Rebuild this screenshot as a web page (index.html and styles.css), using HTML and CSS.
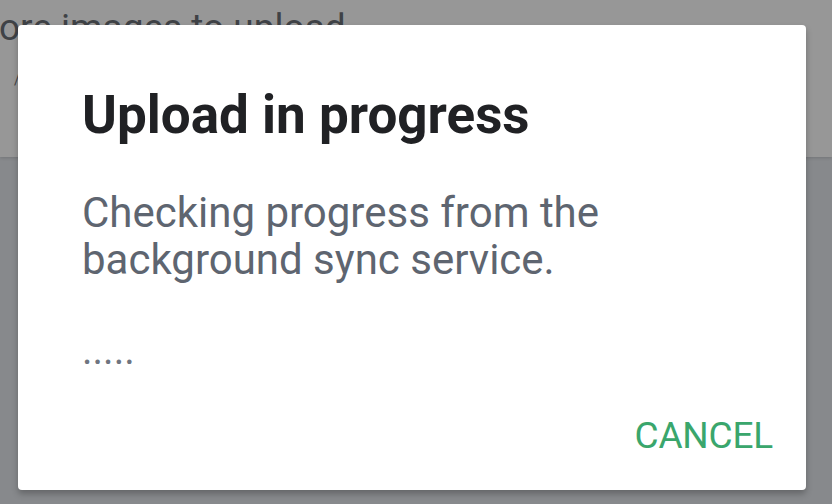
FILE: index.html
```html
<!DOCTYPE html>
<html>
<head>
<meta charset="utf-8">
<link rel="stylesheet" href="styles.css">
</head>
<body>
<div class="page">
  <div class="band">
    <div class="band-text">ore images to upload</div>
    <div class="band-mark">/</div>
  </div>
</div>
<div class="dialog">
  <h1 class="title">Upload in progress</h1>
  <p class="msg">Checking progress from the<br>background sync service.</p>
  <div class="dots">.....</div>
  <div class="actions"><span class="cancel">CANCEL</span></div>
</div>
</body>
</html>
```
FILE: styles.css
```css
html, body {
  margin: 0;
  padding: 0;
}
body {
  width: 832px;
  height: 504px;
  overflow: hidden;
  background: #87898c;
  font-family: Roboto, "Noto Sans", sans-serif;
  position: relative;
}
.band {
  height: 157px;
  background: #979797;
  box-shadow: 0 1px 3px rgba(0,0,0,0.15);
  overflow: hidden;
}
.band-text {
  margin-left: -1px;
  padding-top: 6px;
  font-size: 37px;
  color: #3f4246;
  line-height: 44px;
  white-space: nowrap;
}
.band-mark {
  margin-left: 14px;
  margin-top: 22px;
  font-size: 14px;
  color: #3f4246;
}
.dialog {
  position: absolute;
  left: 18px;
  top: 25px;
  width: 788px;
  height: 465px;
  box-sizing: border-box;
  background: #fff;
  border-radius: 4px;
  box-shadow: 0 4px 6px rgba(0,0,0,0.25);
  padding: 0 33px 0 64px;
}
.title {
  margin: 0;
  padding-top: 58px;
  font-size: 53px;
  font-weight: 700;
  line-height: 64px;
  color: #202124;
}
.msg {
  margin: 0;
  margin-top: 42px;
  font-size: 42px;
  line-height: 47px;
  color: #5e6570;
}
.dots {
  margin-top: 45px;
  font-size: 40px;
  line-height: 45px;
  color: #6f7580;
}
.actions {
  display: flex;
  justify-content: flex-end;
  margin-top: 43px;
}
.cancel {
  font-size: 37px;
  line-height: 40px;
  letter-spacing: -0.2px;
  color: #3aa66c;
}
```
